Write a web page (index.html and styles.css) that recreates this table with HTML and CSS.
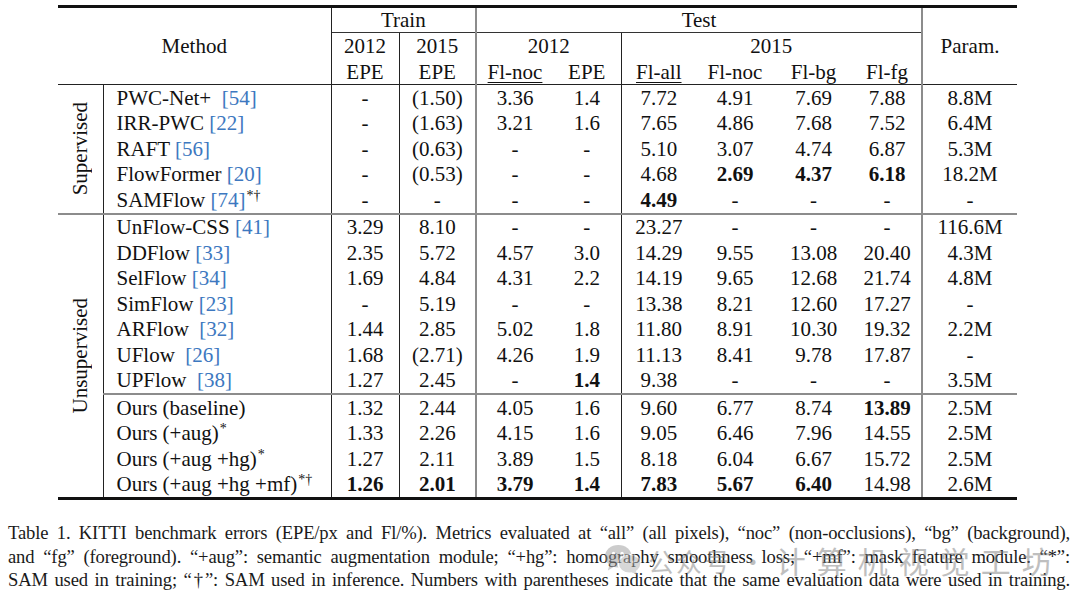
FILE: index.html
```html
<!DOCTYPE html>
<html>
<head>
<meta charset="utf-8">
<link rel="stylesheet" href="styles.css">
</head>
<body>
<div class="page">
<table class="t">
<colgroup>
<col class="w-grp"><col class="w-method"><col class="w68"><col class="w77"><col class="w77"><col class="w68"><col class="w75"><col class="w78"><col class="w79"><col class="w69"><col class="w95">
</colgroup>
<thead>
<tr class="h1">
<th colspan="2" rowspan="3" class="b-r">Method</th>
<th colspan="2" class="b-b b-rg">Train</th>
<th colspan="6" class="b-b b-rg">Test</th>
<th rowspan="3">Param.</th>
</tr>
<tr class="h2">
<th class="b-r">2012</th>
<th class="b-rg">2015</th>
<th colspan="2" class="b-r">2012</th>
<th colspan="4" class="b-rg">2015</th>
</tr>
<tr class="h3">
<th class="b-r">EPE</th>
<th class="b-rg">EPE</th>
<th><span class="ul">Fl-noc</span></th>
<th class="b-r">EPE</th>
<th><span class="ul">Fl-all</span></th>
<th>Fl-noc</th>
<th>Fl-bg</th>
<th class="b-rg">Fl-fg</th>
</tr>
</thead>
<tbody class="sec first">
<tr><td rowspan="5" class="grp"><div class="rot">Supervised</div></td><td class="m">PWC-Net+&nbsp; <span class="ref">[54]</span></td><td class="b-r">-</td><td class="b-rg">(1.50)</td><td>3.36</td><td class="b-r">1.4</td><td>7.72</td><td>4.91</td><td>7.69</td><td class="b-rg">7.88</td><td>8.8M</td></tr>
<tr><td class="m">IRR-PWC <span class="ref">[22]</span></td><td class="b-r">-</td><td class="b-rg">(1.63)</td><td>3.21</td><td class="b-r">1.6</td><td>7.65</td><td>4.86</td><td>7.68</td><td class="b-rg">7.52</td><td>6.4M</td></tr>
<tr><td class="m">RAFT <span class="ref">[56]</span></td><td class="b-r">-</td><td class="b-rg">(0.63)</td><td>-</td><td class="b-r">-</td><td>5.10</td><td>3.07</td><td>4.74</td><td class="b-rg">6.87</td><td>5.3M</td></tr>
<tr><td class="m">FlowFormer <span class="ref">[20]</span></td><td class="b-r">-</td><td class="b-rg">(0.53)</td><td>-</td><td class="b-r">-</td><td>4.68</td><td><b>2.69</b></td><td><b>4.37</b></td><td class="b-rg"><b>6.18</b></td><td>18.2M</td></tr>
<tr><td class="m">SAMFlow <span class="ref">[74]</span><sup>*†</sup></td><td class="b-r">-</td><td class="b-rg">-</td><td>-</td><td class="b-r">-</td><td><b>4.49</b></td><td>-</td><td>-</td><td class="b-rg">-</td><td>-</td></tr>
</tbody>
<tbody class="sec mid">
<tr><td rowspan="11" class="grp"><div class="rot">Unsupervised</div></td><td class="m">UnFlow-CSS <span class="ref">[41]</span></td><td class="b-r">3.29</td><td class="b-rg">8.10</td><td>-</td><td class="b-r">-</td><td>23.27</td><td>-</td><td>-</td><td class="b-rg">-</td><td>116.6M</td></tr>
<tr><td class="m">DDFlow <span class="ref">[33]</span></td><td class="b-r">2.35</td><td class="b-rg">5.72</td><td>4.57</td><td class="b-r">3.0</td><td>14.29</td><td>9.55</td><td>13.08</td><td class="b-rg">20.40</td><td>4.3M</td></tr>
<tr><td class="m">SelFlow <span class="ref">[34]</span></td><td class="b-r">1.69</td><td class="b-rg">4.84</td><td>4.31</td><td class="b-r">2.2</td><td>14.19</td><td>9.65</td><td>12.68</td><td class="b-rg">21.74</td><td>4.8M</td></tr>
<tr><td class="m">SimFlow <span class="ref">[23]</span></td><td class="b-r">-</td><td class="b-rg">5.19</td><td>-</td><td class="b-r">-</td><td>13.38</td><td>8.21</td><td>12.60</td><td class="b-rg">17.27</td><td>-</td></tr>
<tr><td class="m">ARFlow&nbsp; <span class="ref">[32]</span></td><td class="b-r">1.44</td><td class="b-rg">2.85</td><td>5.02</td><td class="b-r">1.8</td><td>11.80</td><td>8.91</td><td>10.30</td><td class="b-rg">19.32</td><td>2.2M</td></tr>
<tr><td class="m">UFlow&nbsp; <span class="ref">[26]</span></td><td class="b-r">1.68</td><td class="b-rg">(2.71)</td><td>4.26</td><td class="b-r">1.9</td><td>11.13</td><td>8.41</td><td>9.78</td><td class="b-rg">17.87</td><td>-</td></tr>
<tr><td class="m">UPFlow&nbsp; <span class="ref">[38]</span></td><td class="b-r">1.27</td><td class="b-rg">2.45</td><td>-</td><td class="b-r"><b>1.4</b></td><td>9.38</td><td>-</td><td>-</td><td class="b-rg">-</td><td>3.5M</td></tr>
<tr class="ours-first"><td class="m">Ours (baseline)</td><td class="b-r">1.32</td><td class="b-rg">2.44</td><td>4.05</td><td class="b-r">1.6</td><td>9.60</td><td>6.77</td><td>8.74</td><td class="b-rg"><b>13.89</b></td><td>2.5M</td></tr>
<tr><td class="m">Ours (+aug)<sup>*</sup></td><td class="b-r">1.33</td><td class="b-rg">2.26</td><td>4.15</td><td class="b-r">1.6</td><td>9.05</td><td>6.46</td><td>7.96</td><td class="b-rg">14.55</td><td>2.5M</td></tr>
<tr><td class="m">Ours (+aug +hg)<sup>*</sup></td><td class="b-r">1.27</td><td class="b-rg">2.11</td><td>3.89</td><td class="b-r">1.5</td><td>8.18</td><td>6.04</td><td>6.67</td><td class="b-rg">15.72</td><td>2.5M</td></tr>
<tr><td class="m">Ours (+aug +hg +mf)<sup>*†</sup></td><td class="b-r"><b>1.26</b></td><td class="b-rg"><b>2.01</b></td><td><b>3.79</b></td><td class="b-r"><b>1.4</b></td><td><b>7.83</b></td><td><b>5.67</b></td><td><b>6.40</b></td><td class="b-rg">14.98</td><td>2.6M</td></tr>
</tbody>
</table>
<div class="caption">
<span class="cl">Table 1. KITTI benchmark errors (EPE/px and Fl/%). Metrics evaluated at “all” (all pixels), “noc” (non-occlusions), “bg” (background),</span>
<span class="cl">and “fg” (foreground). “+aug”: semantic augmentation module; “+hg”: homography smoothness loss; “+mf”: mask feature module. “*”:</span>
<span class="cl">SAM used in training; “†”: SAM used in inference. Numbers with parentheses indicate that the same evaluation data were used in training.</span>
</div>
<div class="wm">
<svg class="wm-icon" width="38" height="34" viewBox="0 0 40 36">
<ellipse cx="15" cy="14" rx="14" ry="12" fill="#9a9a9a"/>
<path d="M6 22 L4 29 L12 24 Z" fill="#9a9a9a"/>
<ellipse cx="27" cy="22" rx="12" ry="10" fill="#b0b0b0" stroke="#fff" stroke-width="1.5"/>
<path d="M33 29 L36 34 L29 31 Z" fill="#b0b0b0"/>
<circle cx="10" cy="11" r="1.8" fill="#fff"/>
<circle cx="19" cy="11" r="1.8" fill="#fff"/>
<circle cx="23" cy="20" r="1.5" fill="#fff"/>
<circle cx="31" cy="20" r="1.5" fill="#fff"/>
</svg>
<span class="wm-a">公众号 ·</span>
<span class="wm-b">计算机视觉工坊</span>
</div>
</div>
</body>
</html>
```
FILE: styles.css
```css
html, body {
  margin: 0;
  padding: 0;
  background: #ffffff;
}
.page {
  position: relative;
  width: 1080px;
  height: 597px;
  overflow: hidden;
  font-family: "Liberation Serif", "Times New Roman", serif;
  color: #111;
}
.t {
  margin: 5px 0 0 58px;
  width: 959px;
  table-layout: fixed;
  border-collapse: collapse;
  font-size: 21px;
  line-height: 24px;
  border-top: 3px solid #111;
  border-bottom: 3px solid #111;
}
.w-grp { width: 45px; }
.w-method { width: 228px; }
.w68 { width: 68px; }
.w75 { width: 75px; }
.w77 { width: 77px; }
.w78 { width: 78px; }
.w79 { width: 79px; }
.w69 { width: 69px; }
.w95 { width: 95px; }
th, td {
  padding: 0;
  text-align: center;
  vertical-align: middle;
  white-space: nowrap;
  font-weight: normal;
}
.h1 th { height: 23px; }
.h2 th { height: 26px; }
.h3 th { height: 25px; }
thead { border-bottom: 1px solid #222; }
tbody td { height: 25.5px; }
.b-r { border-right: 1px solid #222; }
.b-rg { border-right: 2px solid #8c8c8c; }
.b-b { border-bottom: 1px solid #333; }
.ul {
  text-decoration: underline;
  text-decoration-thickness: 1px;
  text-underline-offset: 3px;
}
.grp {
  border-right: 1px solid #222;
  padding: 0;
}
.rot {
  writing-mode: vertical-rl;
  transform: rotate(180deg);
  margin: 0 auto;
  line-height: 24px;
}
.m {
  text-align: left;
  padding-left: 13px;
  border-right: 1px solid #222;
}
.ref { color: #3d78c0; }
sup {
  font-size: 14px;
  line-height: 0;
  vertical-align: 7px;
  margin-left: 1px;
}
b { font-weight: bold; }
.sec.mid { border-top: 2px solid #8c8c8c; }
.ours-first td { border-top: 2px solid #8c8c8c; }
.ours-first td.grp { border-top: none; }
.caption {
  margin: 21px 0 0 8px;
  width: 1062px;
  font-size: 18.6px;
  line-height: 23.5px;
  letter-spacing: -0.15px;
  color: #1a1a1a;
}
.cl {
  display: block;
  white-space: nowrap;
  text-align: justify;
  text-align-last: justify;
  text-justify: inter-word;
}
.wm {
  position: absolute;
  left: 604px;
  top: 538px;
  display: flex;
  align-items: center;
  gap: 6px;
  opacity: 0.5;
  white-space: nowrap;
  pointer-events: none;
}
.wm-a {
  font-family: "Noto Sans CJK SC", "Noto Sans", sans-serif;
  font-size: 26px;
  letter-spacing: 2px;
  color: #808080;
}
.wm-b {
  margin-left: 2px;
  font-family: "Noto Sans CJK SC", "Noto Sans", sans-serif;
  font-size: 30px;
  letter-spacing: 11px;
  color: #808080;
}
```
